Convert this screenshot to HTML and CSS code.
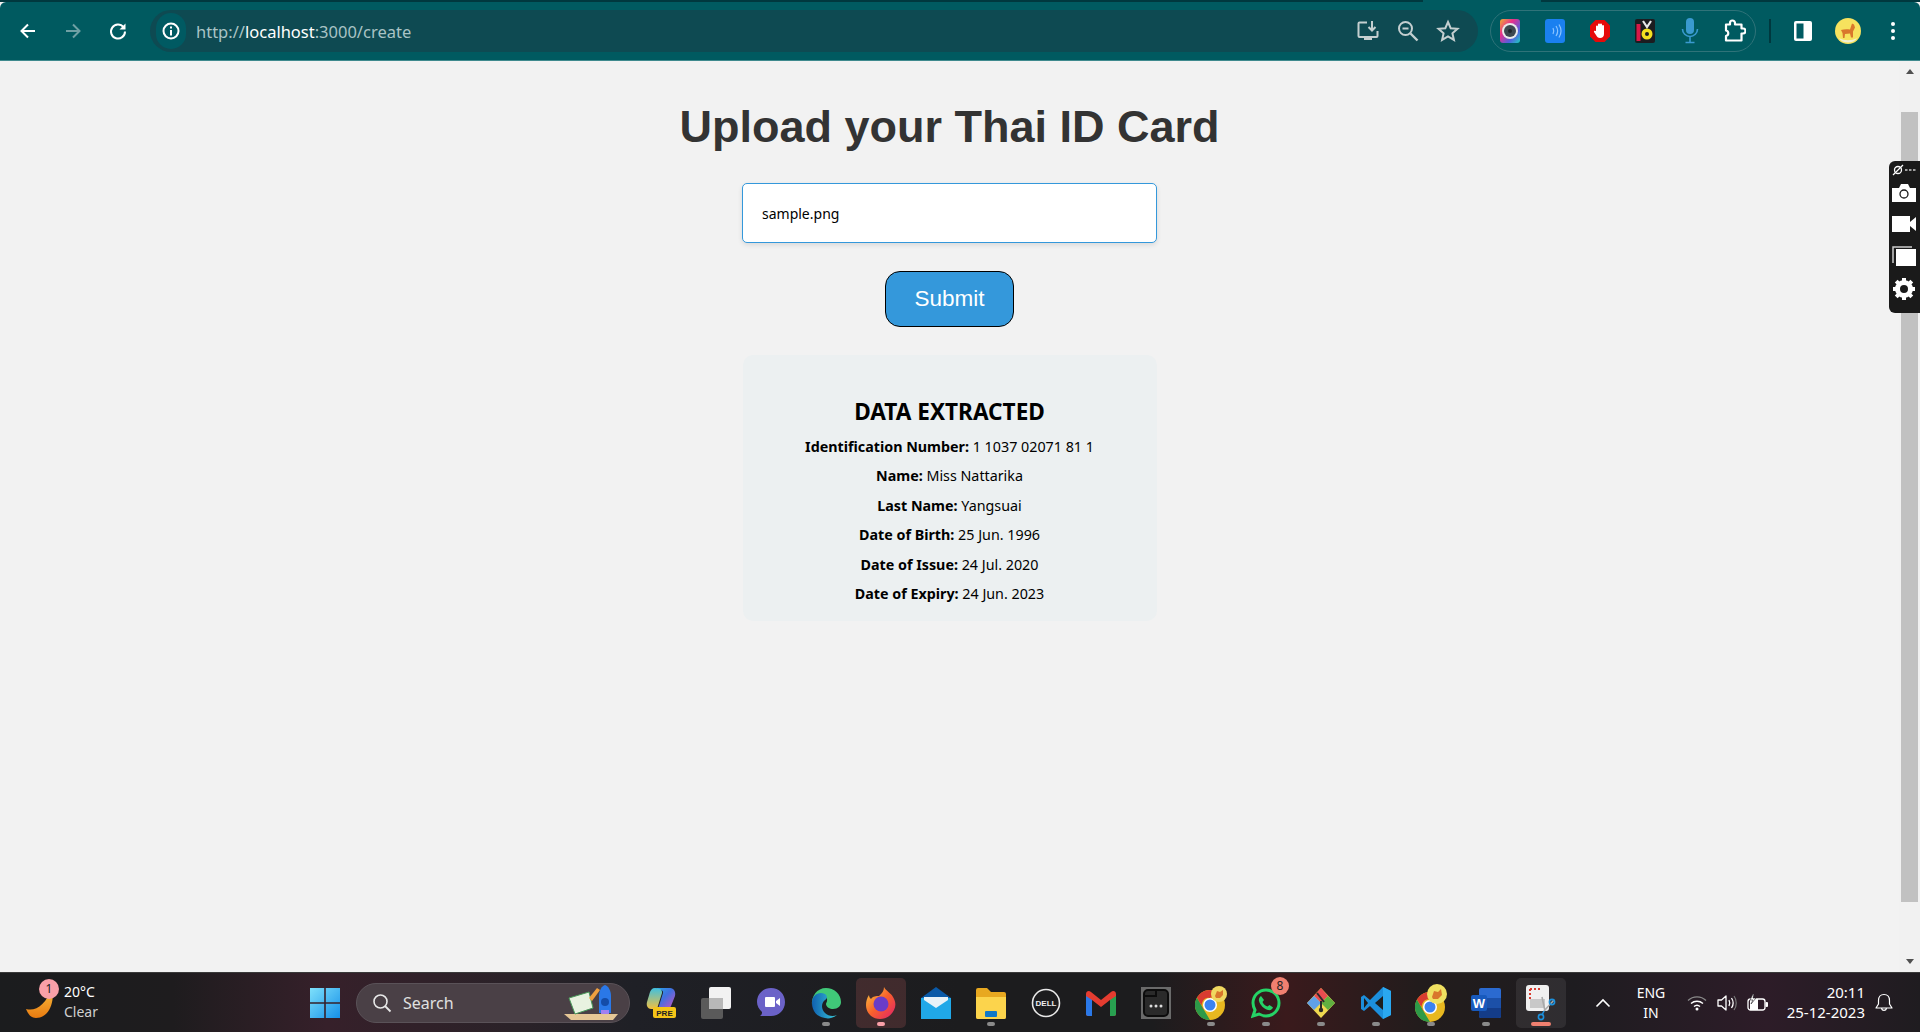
FILE: index.html
```html
<!DOCTYPE html>
<html lang="en">
<head>
  <meta charset="UTF-8">
  <meta name="viewport" content="width=device-width, initial-scale=1.0">
  <title>Upload your Thai ID Card</title>
  <link rel="stylesheet" href="styles.css">
</head>
<body>

<div class="tab-strip"><div class="tab-sliver"></div></div>

<header class="toolbar">
  <div class="nav-btn">
    <svg width="20" height="20" viewBox="0 0 20 20"><path d="M17 10H4M10 3.500L3.500 10l6.500 6.500" fill="none" stroke="#fff" stroke-width="2"/></svg>
  </div>
  <div class="nav-btn">
    <svg width="20" height="20" viewBox="0 0 20 20"><path d="M3 10h13M10 3.500l6.500 6.500-6.500 6.500" fill="none" stroke="#6fa0a4" stroke-width="2"/></svg>
  </div>
  <div class="nav-btn">
    <svg width="20" height="20" viewBox="0 0 20 20"><path d="M15.500 6.200A7 7 0 1 0 17 10.500" fill="none" stroke="#fff" stroke-width="2"/><path d="M17.500 2.500v6h-6z" fill="#fff"/></svg>
  </div>

  <div class="omnibox">
    <div class="site-chip">
      <svg width="20" height="20" viewBox="0 0 20 20"><circle cx="10" cy="10" r="7.500" fill="none" stroke="#fff" stroke-width="2"/><path d="M10 9v5.500M10 5.500v2" stroke="#fff" stroke-width="2"/></svg>
    </div>
    <div class="url">http://<span class="url-host">localhost</span>:3000/create</div>
    <div class="omni-icons">
      <svg width="24" height="24" viewBox="0 0 24 24"><path d="M11 3.500H3.500a1 1 0 0 0-1 1V17a1 1 0 0 0 1 1h17a1 1 0 0 0 1-1v-5" fill="none" stroke="#c4cfd0" stroke-width="2"/><path d="M8 18h8v3H8z" fill="#c4cfd0"/><path d="M16 2v9M12.500 8l3.500 3.500L19.500 8" fill="none" stroke="#c4cfd0" stroke-width="2"/></svg>
      <svg width="24" height="24" viewBox="0 0 24 24"><circle cx="9.500" cy="9.500" r="6.500" fill="none" stroke="#c4cfd0" stroke-width="2"/><path d="M14.500 14.500l7 7" stroke="#c4cfd0" stroke-width="2.400"/><path d="M6.500 9.500h6" stroke="#c4cfd0" stroke-width="2"/></svg>
      <svg width="24" height="24" viewBox="0 0 24 24"><path d="M12 3l2.700 6.200 6.800.6-5.100 4.500 1.500 6.600L12 17.400l-5.900 3.500 1.500-6.600-5.100-4.500 6.800-.6z" fill="none" stroke="#c4cfd0" stroke-width="2"/></svg>
    </div>
  </div>

  <div class="ext-pill">
    <div class="ext">
      <svg width="20" height="24" viewBox="0 0 20 24"><defs><linearGradient id="lensGrad" x1="0" y1="0" x2="1" y2="1"><stop offset="0" stop-color="#f0b030"/><stop offset=".35" stop-color="#e8308c"/><stop offset=".7" stop-color="#5060e0"/><stop offset="1" stop-color="#20d0c0"/></linearGradient></defs><rect width="20" height="24" rx="3" fill="url(#lensGrad)"/><circle cx="10" cy="12" r="8" fill="#e8eaea"/><circle cx="10" cy="12" r="6" fill="#3c4850"/><circle cx="10" cy="12" r="2" fill="#1e272c"/></svg>
    </div>
    <div class="ext">
      <svg width="20" height="24" viewBox="0 0 20 24"><rect width="20" height="24" rx="3" fill="#1a80f0"/><path d="M8 9c1 2 1 4 0 6M11 7c2 3 2 7 0 10M14 5.500c2.500 4 2.500 9 0 13" fill="none" stroke="#8cc4ff" stroke-width="1.200"/></svg>
    </div>
    <div class="ext">
      <svg width="22" height="24" viewBox="0 0 22 24"><path d="M6.500 1h9L21 6.500v11L15.500 23h-9L1 17.500v-11z" fill="#e60a0a"/><path d="M7 12V7.500a1 1 0 0 1 2 0V5.500a1 1 0 0 1 2 0 1 1 0 0 1 2 0v1.500a1 1 0 0 1 2 0v8c0 2.500-1.500 4-4 4-2 0-3-1-4-3l-2-3c-.5-1 .8-1.800 1.500-1z" fill="#fff"/></svg>
    </div>
    <div class="ext">
      <svg width="20" height="24" viewBox="0 0 20 24"><rect width="20" height="24" rx="2" fill="#1c1c20"/><rect x="1.500" y="5" width="4" height="17" fill="#d81848"/><circle cx="12" cy="15" r="5.500" fill="#f5e020"/><circle cx="12" cy="15" r="2" fill="#1c1c20"/><path d="M8 2l4 6 4-6" fill="none" stroke="#e8e8e8" stroke-width="2.200"/></svg>
    </div>
    <div class="ext">
      <svg width="20" height="26" viewBox="0 0 20 26"><rect x="6" y="0" width="8" height="16" rx="4" fill="#3a9ad0"/><path d="M2.500 11a7.500 7.500 0 0 0 15 0M10 19v5M5.500 24.500h9" fill="none" stroke="#3a9ad0" stroke-width="1.600"/></svg>
    </div>
    <div class="ext">
      <svg width="24" height="24" viewBox="0 0 24 24"><path d="M4 5.500h4V4a2.500 2.500 0 0 1 5 0v1.500h6.500V9.500H21a2.500 2.500 0 0 1 0 5h-1.500v7H4V17a2.800 2.800 0 0 0 0-5.500z" fill="none" stroke="#fff" stroke-width="2.200" stroke-linejoin="round"/></svg>
    </div>
  </div>

  <div class="toolbar-divider"></div>

  <div class="nav-btn">
    <svg width="18" height="20" viewBox="0 0 18 20"><rect width="18" height="20" rx="2" fill="#fff"/><rect x="2.500" y="2.500" width="7" height="15" fill="#005a62"/></svg>
  </div>
  <div class="nav-btn">
    <svg width="26" height="26" viewBox="0 0 26 26"><circle cx="13" cy="13" r="13" fill="#f6e25e"/><path d="M6 12c3-1 6-1 9-.5l2-6 2 1 1 3-2 4v6h-2l-1-4-5 .5-.5 4H8l-.500-5z" fill="#d9772c"/><path d="M4 20c5 3 13 3 18 0-3 6-15 6-18 0z" fill="#f2efd6"/></svg>
  </div>
  <div class="nav-btn">
    <svg width="6" height="20" viewBox="0 0 6 20"><circle cx="3" cy="3" r="2" fill="#fff"/><circle cx="3" cy="10" r="2" fill="#fff"/><circle cx="3" cy="17" r="2" fill="#fff"/></svg>
  </div>
</header>

<div class="viewport">
  <main class="page">
    <h1>Upload your Thai ID Card</h1>
    <input class="file-input" type="text" value="sample.png">
    <button class="submit-btn">Submit</button>

    <section class="result-card">
      <h3>DATA EXTRACTED</h3>
      <p><b>Identification Number:</b> 1 1037 02071 81 1</p>
      <p><b>Name:</b> Miss Nattarika</p>
      <p><b>Last Name:</b> Yangsuai</p>
      <p><b>Date of Birth:</b> 25 Jun. 1996</p>
      <p><b>Date of Issue:</b> 24 Jul. 2020</p>
      <p><b>Date of Expiry:</b> 24 Jun. 2023</p>
    </section>
  </main>

  <div class="scrollbar">
    <div class="scroll-arrow scroll-up"></div>
    <div class="scroll-thumb"></div>
    <div class="scroll-arrow scroll-down"></div>
  </div>

  <!-- screen capture widget floating over the scrollbar -->
  <div class="capture-widget">
    <svg width="24" height="12" viewBox="0 0 24 12"><circle cx="6" cy="6" r="3.500" fill="none" stroke="#fff" stroke-width="1.300"/><path d="M1 11L11 1" stroke="#fff" stroke-width="1.300"/><path d="M13 6h2.500M17 6h2.500M21 6h2.500" stroke="#ccc" stroke-width="1.600"/></svg>
    <svg width="24" height="18" viewBox="0 0 24 18"><path d="M0 4h7l2-4h7l2 4h6v14H0z" fill="#fff"/><circle cx="12" cy="10" r="4" fill="none" stroke="#1a1a1a" stroke-width="1.300"/></svg>
    <svg width="24" height="16" viewBox="0 0 24 16"><rect width="18" height="16" fill="#fff"/><path d="M18 6l6-5v14l-6-5z" fill="#fff"/></svg>
    <svg width="24" height="20" viewBox="0 0 24 20"><path d="M1 17V1h19" fill="none" stroke="#ccc" stroke-width="1.500"/><rect x="4" y="3" width="20" height="17" fill="#fff"/></svg>
    <svg width="24" height="24" viewBox="0 0 24 24"><circle cx="12" cy="12" r="6.500" fill="none" stroke="#fff" stroke-width="5"/><path d="M12 1v5M12 18v5M1 12h5M18 12h5M4.200 4.200l3.500 3.500M16.300 16.300l3.500 3.500M4.200 19.800l3.500-3.500M16.300 7.700l3.500-3.500" stroke="#fff" stroke-width="4"/></svg>
  </div>
</div>

<footer class="taskbar">
  <div class="weather">
    <svg class="moon" width="30" height="32" viewBox="0 0 30 32"><defs><linearGradient id="moonGrad" x1="0" y1="0" x2="0" y2="1"><stop offset="0" stop-color="#f8c040"/><stop offset="1" stop-color="#e87a10"/></linearGradient></defs><path d="M26 1c3 12-2 30-16 30C5 31 2 27 0 22c10 3 20-5 26-21z" fill="url(#moonGrad)"/></svg>
    <span class="weather-badge">1</span>
    <div class="weather-text">
      <div>20°C</div>
      <div class="weather-sub">Clear</div>
    </div>
  </div>

  <div class="task-item">
    <svg width="30" height="30" viewBox="0 0 30 30"><defs><linearGradient id="winGrad" x1="0" y1="0" x2="1" y2="1"><stop offset="0" stop-color="#7ee0fb"/><stop offset="1" stop-color="#1590e8"/></linearGradient></defs><path d="M0 0h14.200v14.200H0zM15.800 0H30v14.200H15.800zM0 15.800h14.200V30H0zM15.800 15.800H30V30H15.800z" fill="url(#winGrad)"/></svg>
  </div>

  <div class="search-box">
    <svg width="20" height="20" viewBox="0 0 20 20"><circle cx="8.500" cy="8.500" r="6.500" fill="none" stroke="#e8e8e8" stroke-width="1.600"/><path d="M13 13l5.500 5.500" stroke="#e8e8e8" stroke-width="1.800"/></svg>
    <span class="search-label">Search</span>
    <svg class="search-art" width="58" height="38" viewBox="0 0 58 38"><path d="M1 30h54l-5 6H8z" fill="#e6c796"/><path d="M6 14l20-6 4 16-18 6z" fill="#e8f2e0" stroke="#4a9a5a" stroke-width="1"/><path d="M26 14l8-10 3 2-8 11z" fill="#f0a040"/><path d="M36 12c0-6 3-10 6-11 3 1 6 5 6 11v17H36z" fill="#2a78e8"/><path d="M38 26h8v4h-8z" fill="#a080f0"/><circle cx="42" cy="18" r="4" fill="#144ca8"/></svg>
  </div>

  <div class="task-item">
    <svg width="30" height="32" viewBox="0 0 30 32"><defs><linearGradient id="copGrad" x1="0" y1="0" x2="1" y2="1"><stop offset="0" stop-color="#28a8e8"/><stop offset=".45" stop-color="#4070e0"/><stop offset="1" stop-color="#d050c0"/></linearGradient><linearGradient id="copGrad2" x1="0" y1="0" x2="0" y2="1"><stop offset="0" stop-color="#40c0e0"/><stop offset="1" stop-color="#f0c040"/></linearGradient></defs><path d="M9 1h15c4 0 6 4 5 8l-4 10c-1 2-2 3-4 3h-9l5-16c.5-2-1-3-3-3z" fill="url(#copGrad)"/><path d="M9 1c-3 0-4 2-5 4L1 15c-1 4 1 7 4 7h6l5-16c.5-2-1-5-7-5z" fill="url(#copGrad2)"/><rect x="7" y="20" width="23" height="11" rx="2" fill="#f5c518"/><text class="pre-label" x="18.500" y="29">PRE</text></svg>
  </div>
  <div class="task-item">
    <svg width="30" height="32" viewBox="0 0 30 32"><rect x="0" y="11" width="22" height="21" rx="2" fill="#5a5a5a"/><rect x="8" y="0" width="22" height="22" rx="2" fill="#f2f2f2"/><rect x="8" y="11" width="14" height="11" fill="#b8b8b8"/></svg>
  </div>
  <div class="task-item">
    <svg width="30" height="32" viewBox="0 0 30 32"><path d="M15 1c8 0 14 6 14 14s-6 14-14 14H4c2-1 2-3 2-4-3-3-5-6-5-10C1 7 7 1 15 1z" fill="#6b62c8"/><rect x="9" y="10" width="10" height="10" rx="1" fill="#fff"/><path d="M20 14l4-3v8l-4-3z" fill="#fff"/></svg>
  </div>
  <div class="task-item running">
    <svg width="30" height="32" viewBox="0 0 30 32"><defs><linearGradient id="edgeGrad" x1="0" y1="0" x2="1" y2="0"><stop offset="0" stop-color="#1060b0"/><stop offset="1" stop-color="#38c8d8"/></linearGradient></defs><path d="M15 1c8 0 15 6 15 14 0 4-3 7-8 7-3 0-7-2-7-5 0-1 1-2 1-3 1-5-4-6-7-4C3 12 1 16 1 19 0 9 6 1 15 1z" fill="#40c878"/><path d="M1 16C1 8 8 4 14 7c3 2 2 5 0 6-4 3-4 9 0 13 3 3 8 4 12 2-4 3-8 4-12 3C6 30 1 24 1 16z" fill="url(#edgeGrad)"/></svg>
  </div>
  <div class="task-item running active">
    <svg width="30" height="32" viewBox="0 0 30 32"><defs><linearGradient id="foxGrad" x1="0" y1="0" x2="1" y2="1"><stop offset="0" stop-color="#fbd040"/><stop offset=".5" stop-color="#f8602c"/><stop offset="1" stop-color="#e0206c"/></linearGradient></defs><path d="M18 0c2 4 7 6 9 10 3 5 3 9 1 13-3 6-8 9-14 9C6 32 0 26 0 18c0-4 1-7 3-10 0 2 1 3 2 4 2-3 5-3 8-3 3-3 5-5 5-9z" fill="url(#foxGrad)"/><circle cx="15" cy="17" r="7.500" fill="#6a3cc8"/></svg>
  </div>
  <div class="task-item">
    <svg width="30" height="32" viewBox="0 0 30 32"><path d="M15 0l15 11H0z" fill="#0a5aa8"/><path d="M0 11h30v21H0z" fill="#20a8e8"/><path d="M3 10h24v3L15 21 3 13z" fill="#e8f2f8"/></svg>
  </div>
  <div class="task-item running">
    <svg width="30" height="32" viewBox="0 0 30 32"><path d="M0 3a2 2 0 0 1 2-2h9l4 4h13a2 2 0 0 1 2 2v23a2 2 0 0 1-2 2H2a2 2 0 0 1-2-2z" fill="#e8a820"/><path d="M0 10h30v20a2 2 0 0 1-2 2H2a2 2 0 0 1-2-2z" fill="#fcd44c"/><rect x="9" y="24" width="12" height="6" rx="1" fill="#1078c8"/></svg>
  </div>
  <div class="task-item">
    <svg width="30" height="30" viewBox="0 0 30 30"><circle cx="15" cy="15" r="13.500" fill="none" stroke="#e8e8e8" stroke-width="1.600"/><text class="dell-label" x="15" y="18">DELL</text></svg>
  </div>
  <div class="task-item">
    <svg width="30" height="26" viewBox="0 0 30 26"><path d="M0 4c0-3 3-4 5-2l10 8 10-8c2-2 5-1 5 2v20c0 1-1 2-2 2h-4V10l-9 7-9-7v16H2c-1 0-2-1-2-2z" fill="#e43c30"/><path d="M0 6v18c0 1 1 2 2 2h4V10z" fill="#2a78e8"/><path d="M30 6v18c0 1-1 2-2 2h-4V10z" fill="#28a050"/></svg>
  </div>
  <div class="task-item">
    <svg width="30" height="32" viewBox="0 0 30 32"><rect width="30" height="32" fill="#6a6a6a"/><rect x="3" y="3" width="24" height="26" rx="4" fill="#2a2a2a" stroke="#0c0c0c" stroke-width="2"/><path d="M4 9h11V3" fill="none" stroke="#0c0c0c" stroke-width="2"/><circle cx="10" cy="19" r="1.500" fill="#ddd"/><circle cx="15" cy="19" r="1.500" fill="#ddd"/><circle cx="20" cy="19" r="1.500" fill="#ddd"/></svg>
  </div>
  <div class="task-item running">
    <svg width="32" height="34" viewBox="0 0 32 34"><circle cx="15" cy="19" r="15" fill="#e8b820"/><path d="M15 4a15 15 0 0 1 13 7.500H15z" fill="#d83c30"/><path d="M2 11.500L9 24l6 10A15 15 0 0 1 2 11.500z" fill="#2d9a48"/><path d="M2 11.500A15 15 0 0 1 15 4v8a7 7 0 0 0-6 12z" fill="#d83c30"/><circle cx="15" cy="19" r="7" fill="#fff"/><circle cx="15" cy="19" r="5.500" fill="#3b82f0"/><circle cx="24" cy="8" r="8" fill="#f0d860"/><path d="M20 10l2-5 3 1 3-2v5l-3 3h-4z" fill="#d9772c"/></svg>
  </div>
  <div class="task-item running">
    <svg width="30" height="32" viewBox="0 0 30 32"><path d="M15 3a13 13 0 0 1 0 26c-2 0-5-1-7-2l-6 2 2-6c-1-2-2-4-2-7A13 13 0 0 1 15 3z" fill="none" stroke="#25d366" stroke-width="3"/><path d="M10 9l3 4-1.500 2c1 2 2.500 3.500 5 4.500l2-1.500 3.500 2.500c-1 2-3 3-5 2.500-4-1-8-5-9-9-.5-2 .5-4 2-5z" fill="#25d366"/></svg>
    <span class="task-badge">8</span>
  </div>
  <div class="task-item running">
    <svg width="30" height="32" viewBox="0 0 30 32"><path d="M15 1l14 15-14 15L1 16z" fill="#f0d850"/><path d="M15 1l7 8-7 7-7-7z" fill="#e84c50"/><path d="M22 9l7 7-7 7-7-7z" fill="#60b040"/><path d="M8 9l7 7-7 7-7-7z" fill="#60a0e8"/><path d="M11 6l7 9M15 14v9" stroke="#2a2a2a" stroke-width="2"/><circle cx="15" cy="23" r="2.200" fill="#2a2a2a"/></svg>
  </div>
  <div class="task-item running">
    <svg width="30" height="32" viewBox="0 0 30 32"><path d="M22 0l8 4v24l-8 4L9 19l-6 5-3-2v-12l3-2 6 5z" fill="#1c8fdc"/><path d="M22 9l-8 7 8 7z" fill="#1e1e1e"/><path d="M22 0l8 4v24l-8 4z" fill="#2aa8f0"/><path d="M3 11l4 5-4 5z" fill="#1e1e1e"/></svg>
  </div>
  <div class="task-item running">
    <svg width="32" height="38" viewBox="0 0 32 38"><circle cx="15" cy="23" r="15" fill="#e8b820"/><path d="M2 15.500L9 28l6 10A15 15 0 0 1 2 15.500z" fill="#2d9a48"/><path d="M2 15.500A15 15 0 0 1 15 8h13v7.500H15a7 7 0 0 0-6 12z" fill="#d83c30"/><circle cx="15" cy="23" r="7" fill="#fff"/><circle cx="15" cy="23" r="5.500" fill="#3b82f0"/><circle cx="22" cy="10" r="10" fill="#efe060"/><path d="M17 13l2-6 4 1 3-3 1 6-4 4h-5z" fill="#d9772c"/></svg>
  </div>
  <div class="task-item running">
    <svg width="30" height="30" viewBox="0 0 30 30"><rect x="8" y="0" width="22" height="30" rx="2" fill="#2b6ad0"/><path d="M8 10h22v10H8z" fill="#1c50a8"/><path d="M8 20h22v8a2 2 0 0 1-2 2H10a2 2 0 0 1-2-2z" fill="#143c88"/><rect x="0" y="7" width="16" height="16" rx="2" fill="#185abd"/><text class="word-label" x="8" y="20">W</text></svg>
  </div>
  <div class="task-item running active current">
    <svg width="30" height="36" viewBox="0 0 30 36"><rect x="0" y="0" width="23" height="26" rx="3" fill="#f0f0f0"/><path d="M4 4h2M8 4h2M12 4h2M4 4v2M4 8v2M4 12v2" stroke="#d83c30" stroke-width="2"/><rect x="4" y="14" width="15" height="9" fill="#c8c8c8"/><path d="M16 12l3 14M28 15l-10 11" stroke="#aaa" stroke-width="1.600"/><circle cx="26" cy="17" r="2.600" fill="none" stroke="#1c90dc" stroke-width="1.600"/><circle cx="15" cy="32" r="2.600" fill="none" stroke="#1c90dc" stroke-width="1.600"/><path d="M18 26l-2 4" stroke="#1c90dc" stroke-width="1.600"/></svg>
  </div>

  <div class="tray">
    <svg class="tray-chevron" width="16" height="10" viewBox="0 0 16 10"><path d="M1.500 8.500L8 2l6.500 6.500" fill="none" stroke="#fff" stroke-width="1.600"/></svg>
    <div class="lang">ENG<br>IN</div>
    <div class="tray-icons">
      <svg width="20" height="16" viewBox="0 0 20 16"><path d="M1 5.500a13 13 0 0 1 18 0" fill="none" stroke="#8a8a8a" stroke-width="1.300"/><path d="M4 8.500a9 9 0 0 1 12 0M7 11.500a4.500 4.500 0 0 1 6 0" fill="none" stroke="#fff" stroke-width="1.400"/><circle cx="10" cy="14" r="1.500" fill="#fff"/></svg>
      <svg width="20" height="18" viewBox="0 0 20 18"><path d="M1 6h3.500L9 2v14l-4.500-4H1z" fill="none" stroke="#fff" stroke-width="1.300" stroke-linejoin="round"/><path d="M12 6c1 2 1 4 0 6M14.500 4c2 3 2 7 0 10" fill="none" stroke="#fff" stroke-width="1.300"/><path d="M17 2c3 4 3 10 0 14" fill="none" stroke="#777" stroke-width="1.200"/></svg>
      <svg width="22" height="18" viewBox="0 0 22 18"><rect x="1" y="5" width="17" height="11" rx="2.500" fill="none" stroke="#fff" stroke-width="1.300"/><path d="M3 5h8v11H3z" fill="#fff"/><rect x="18.500" y="8" width="2.500" height="5" rx="1" fill="#fff"/><path d="M6 0L3 6h3L4 10l5-6H6l1-4z" fill="#fff" stroke="#1e1a20" stroke-width=".6"/></svg>
    </div>
    <div class="clock">20:11<br>25-12-2023</div>
    <svg class="bell" width="18" height="20" viewBox="0 0 18 20"><path d="M9 1.500c3.500 0 5.500 2.500 5.500 6v3.500L17 15H1l2.500-4V7.500c0-3.500 2-6 5.500-6zM6.500 15.500a2.600 2.600 0 0 0 5 0" fill="none" stroke="#fff" stroke-width="1.200" stroke-linejoin="round"/></svg>
  </div>
</footer>

</body>
</html>
```

FILE: styles.css
```css
* {
  box-sizing: border-box;
}

html,
body {
  height: 100%;
}

body {
  margin: 0;
  display: flex;
  flex-direction: column;
  overflow: hidden;
  background: #f2f2f2;
  font-family: "Noto Sans", "Open Sans", sans-serif;
}

/* browser chrome */
.tab-strip {
  height: 2px;
  background: #00383e;
}

.tab-sliver {
  width: 118px;
  height: 2px;
  margin-left: 1423px;
  background: #005a60;
}

.toolbar {
  height: 59px;
  display: flex;
  align-items: center;
  padding: 0 5px;
  background: #005a60;
  border-bottom: 1px solid #3f8a8e;
  border-radius: 6px 6px 0 0;
}

.nav-btn {
  width: 45px;
  flex: none;
  display: flex;
  align-items: center;
  justify-content: center;
}

.omnibox {
  flex: 1;
  height: 42px;
  margin-left: 10px;
  display: flex;
  align-items: center;
  background: #0e4a52;
  border-radius: 21px;
}

.site-chip {
  width: 30px;
  height: 36px;
  margin-left: 6px;
  display: flex;
  align-items: center;
  justify-content: center;
  background: #005a62;
  border-radius: 18px;
}

.url {
  margin-left: 10px;
  flex: 1;
  font-family: "Noto Sans", sans-serif;
  font-size: 16.500px;
  color: #a9c3c5;
}

.url-host {
  color: #fff;
}

.omni-icons {
  display: flex;
  gap: 16px;
  margin-right: 18px;
}

.ext-pill {
  width: 266px;
  height: 42px;
  margin-left: 12px;
  display: flex;
  align-items: center;
  border: 1px solid #2f7379;
  border-radius: 21px;
}

.ext {
  width: 44.800px;
  flex: none;
  display: flex;
  align-items: center;
  justify-content: center;
}

.ext:first-child {
  margin-left: -3px;
}

.toolbar-divider {
  width: 2px;
  height: 24px;
  margin: 0 9px 0 13px;
  background: #00383e;
}

/* page */
.viewport {
  flex: 1;
  position: relative;
  display: flex;
  min-height: 0;
}

.page {
  flex: 1;
  display: flex;
  flex-direction: column;
  align-items: center;
  background: #f2f2f2;
}

h1 {
  margin: 43px 0 33px;
  font-family: "Liberation Sans", Arial, sans-serif;
  font-size: 45px;
  line-height: 46px;
  font-weight: bold;
  color: #333;
}

.file-input {
  width: 415px;
  height: 60px;
  padding: 0 19px;
  background: #fff;
  border: 1px solid #3498db;
  border-radius: 5px;
  box-shadow: 0 2px 5px rgba(0, 0, 0, 0.1);
  font-family: "Noto Sans", sans-serif;
  font-size: 14px;
  color: #000;
}

.submit-btn {
  width: 129px;
  height: 56px;
  margin-top: 28px;
  background: #3498db;
  border: 1px solid #000;
  border-radius: 15px;
  font-family: "Liberation Sans", Arial, sans-serif;
  font-size: 22.500px;
  color: #fff;
}

.result-card {
  width: 414px;
  height: 266px;
  margin-top: 28px;
  padding-top: 43px;
  background: #ecf0f1;
  border-radius: 10px;
  text-align: center;
  color: #000;
}

.result-card h3 {
  margin: 0 0 6px;
  font-size: 22.600px;
  line-height: 28px;
  font-weight: 700;
}

.result-card p {
  margin: 0;
  font-size: 14.300px;
  line-height: 29.400px;
}

.result-card b {
  font-weight: 700;
}

/* page scrollbar */
.scrollbar {
  width: 21px;
  flex: none;
  display: flex;
  flex-direction: column;
  align-items: center;
  background: #f1f1f1;
}

.scroll-arrow {
  width: 0;
  height: 0;
  flex: none;
  border-left: 4.500px solid transparent;
  border-right: 4.500px solid transparent;
}

.scroll-up {
  margin-top: 8px;
  border-bottom: 5px solid #505050;
}

.scroll-down {
  margin-bottom: 8px;
  border-top: 5px solid #505050;
}

.scroll-thumb {
  width: 17px;
  height: 790px;
  margin: 38px 0 auto;
  background: #c1c1c1;
}

.capture-widget {
  position: absolute;
  top: 100px;
  right: 0;
  width: 31px;
  height: 152px;
  padding: 3px 0 0 3px;
  display: flex;
  flex-direction: column;
  align-items: flex-start;
  background: #1a1a1a;
  border-radius: 6px 0 0 6px;
}

.capture-widget svg {
  flex: none;
}

.capture-widget svg:nth-child(2) {
  margin-top: 8px;
}

.capture-widget svg:nth-child(3) {
  margin-top: 14px;
}

.capture-widget svg:nth-child(4) {
  margin-top: 14px;
}

.capture-widget svg:nth-child(5) {
  margin-top: 11px;
}

/* windows taskbar */
.taskbar {
  height: 60px;
  flex: none;
  display: flex;
  align-items: center;
  color: #fff;
  font-family: "Noto Sans", sans-serif;
  border-top: 1px solid #3a3a3a;
  background: linear-gradient(90deg, #1b1c1e 0%, #1e1c1e 9%, #36202a 17%, #2a2228 27%, #1f2026 33%, #1c1c1e 50%, #1c1c1e 60%, #3a1a1c 67%, #221c1c 74%, #1e1c20 82%, #2d1c28 92%, #1f1c20 100%);
}

.weather {
  position: relative;
  width: 297px;
  flex: none;
  display: flex;
  align-items: center;
  padding-left: 26px;
}

.weather-badge {
  position: absolute;
  left: 39px;
  top: -3px;
  width: 20px;
  height: 20px;
  border-radius: 50%;
  background: #f9a0a8;
  color: #222;
  font-size: 12px;
  line-height: 20px;
  text-align: center;
}

.weather-text {
  margin: 0 0 2px 8px;
  font-size: 14px;
  line-height: 20px;
}

.weather-sub {
  color: #d0d0d0;
}

.task-item {
  position: relative;
  width: 55px;
  height: 50px;
  flex: none;
  display: flex;
  align-items: center;
  justify-content: center;
}

.task-item.active {
  width: 50px;
  margin: 0 2.500px;
  background: rgba(255, 120, 120, 0.16);
  border-radius: 5px;
}

.task-item.current {
  background: rgba(255, 255, 255, 0.08);
}

.task-item.running::after {
  content: "";
  position: absolute;
  left: 50%;
  bottom: 2px;
  width: 8px;
  height: 4px;
  margin-left: -4px;
  background: #8a8a8a;
  border-radius: 2px;
}

.task-item.active::after {
  background: #f9a0a8;
}

.task-item.current::after {
  width: 20px;
  margin-left: -10px;
  background: #f08070;
}

.task-badge {
  position: absolute;
  right: 4px;
  top: -1px;
  width: 18px;
  height: 18px;
  border-radius: 50%;
  background: #f08070;
  color: #222;
  font-size: 12px;
  line-height: 18px;
  text-align: center;
}

.search-box {
  width: 274px;
  height: 40px;
  margin: 0 3px 0 4px;
  flex: none;
  display: flex;
  align-items: center;
  padding: 0 8px 0 15px;
  background: #4a4046;
  border: 1px solid #5a5258;
  border-radius: 20px;
}

.search-label {
  margin-left: 11px;
  flex: 1;
  font-size: 16px;
  color: #e0e0e0;
}

.pre-label {
  font-family: "Liberation Sans", sans-serif;
  font-size: 8px;
  font-weight: bold;
  fill: #222;
  text-anchor: middle;
}

.dell-label {
  font-family: "Liberation Sans", sans-serif;
  font-size: 8px;
  font-weight: bold;
  fill: #eee;
  text-anchor: middle;
}

.word-label {
  font-family: "Liberation Sans", sans-serif;
  font-size: 13px;
  font-weight: bold;
  fill: #fff;
  text-anchor: middle;
}

.tray {
  flex: 1;
  display: flex;
  align-items: center;
  font-size: 14px;
}

.tray-chevron {
  margin-left: 27px;
}

.lang {
  width: 50px;
  margin-left: 15px;
  text-align: center;
  line-height: 20px;
}

.tray-icons {
  display: flex;
  align-items: center;
  gap: 10px;
  margin-left: 11px;
}

.clock {
  width: 92px;
  margin: 0 0 2px 4px;
  text-align: right;
  font-size: 15px;
  line-height: 20px;
}

.bell {
  margin-left: 10px;
}
```
